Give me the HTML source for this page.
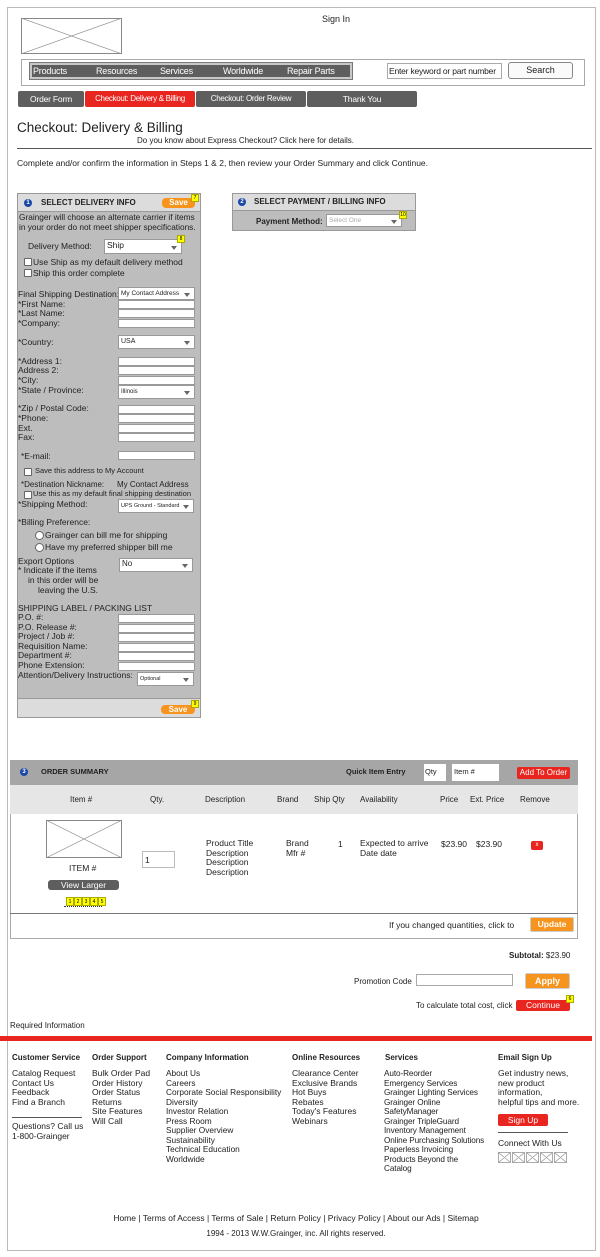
<!DOCTYPE html>
<html><head><meta charset="utf-8"><style>
*{margin:0;padding:0;box-sizing:border-box}
body{width:600px;height:1257px;position:relative;background:#fff;font-family:"Liberation Sans",Arial,sans-serif;font-size:9px;color:#222;overflow:hidden}
.a{position:absolute;white-space:nowrap;line-height:10px}
.box{position:absolute}
.inp{position:absolute;background:#fff;border:1px solid #999;height:9px}
.sel{position:absolute;background:#fff;border:1px solid #999;font-size:7px;line-height:12px;padding-left:2px}
.sel:after{content:"";position:absolute;right:4px;top:50%;margin-top:-1px;border-left:3px solid transparent;border-right:3px solid transparent;border-top:4px solid #666}
.badge{position:absolute;width:8px;height:8px;background:#ff0;border:1px solid #aa0;font-size:5px;line-height:6px;text-align:center;color:#000}
.cb{position:absolute;width:8px;height:8px;border:1px solid #666;background:#fff;border-radius:1px}
.rb{position:absolute;width:9px;height:9px;border:1px solid #666;background:#fff;border-radius:50%}
.num{position:absolute;width:8px;height:8px;border-radius:50%;background:#1a48a8;color:#fff;font-size:6px;line-height:8px;text-align:center;font-weight:bold}
.tab{position:absolute;top:91px;height:16px;background:#5e5e5e;color:#fff;text-align:center;line-height:16px;font-size:8.5px;border-radius:2px;white-space:nowrap;overflow:hidden;letter-spacing:-0.2px}
.b{font-weight:bold}
</style></head><body>
<div class="box" style="left:7px;top:7px;width:589px;height:1244px;border:1px solid #bbb"></div>
<svg class="box" style="left:21px;top:18px" width="101" height="36"><rect x=".5" y=".5" width="100" height="35" fill="#fff" stroke="#888"/><path d="M0 0L101 36M101 0L0 36" stroke="#888" stroke-width=".6"/></svg>
<div class="a" style="left:322px;top:14px">Sign In</div>
<div class="box" style="left:21px;top:59px;width:564px;height:27px;border:1px solid #aaa"></div>
<div class="box" style="left:30px;top:63px;width:322px;height:16px;background:#5e5e5e;border:2px solid #c8c8c8;outline:1px solid #777"></div>
<div class="a" style="left:33px;top:66px;color:#fff;letter-spacing:-0.2px">Products</div>
<div class="a" style="left:96px;top:66px;color:#fff;letter-spacing:-0.2px">Resources</div>
<div class="a" style="left:160px;top:66px;color:#fff;letter-spacing:-0.2px">Services</div>
<div class="a" style="left:223px;top:66px;color:#fff;letter-spacing:-0.2px">Worldwide</div>
<div class="a" style="left:287px;top:66px;color:#fff;letter-spacing:-0.2px">Repair Parts</div>
<div class="box" style="left:387px;top:63px;width:115px;height:16px;border:1px solid #aaa"></div>
<div class="a" style="left:389px;top:66px;font-size:8.5px;letter-spacing:-0.2px">Enter keyword or part number</div>
<div class="box" style="left:508px;top:62px;width:65px;height:17px;border:1px solid #888;border-radius:3px;background:#fafafa;text-align:center;line-height:15px">Search</div>
<div class="tab" style="left:18px;width:66px">Order Form</div>
<div class="tab" style="left:85px;width:110px;background:#e8251f;font-size:8px;letter-spacing:-0.3px">Checkout: Delivery &amp; Billing</div>
<div class="tab" style="left:196px;width:110px;font-size:8px;letter-spacing:-0.3px">Checkout: Order Review</div>
<div class="tab" style="left:307px;width:110px">Thank You</div>
<div class="a" style="left:17px;top:120px;font-size:13.5px;line-height:15px">Checkout: Delivery &amp; Billing</div>
<div class="a" style="left:137px;top:136px;font-size:8px">Do you know about Express Checkout? Click here for details.</div>
<div class="box" style="left:17px;top:148px;width:575px;height:1px;background:#555"></div>
<div class="a" style="left:17px;top:158px;font-size:8.5px">Complete and/or confirm the information in Steps 1 &amp; 2, then review your Order Summary and click Continue.</div>

<div class="box" style="left:17px;top:193px;width:184px;height:525px;background:#bdbdbd;border:1px solid #999"></div>
<div class="box" style="left:17px;top:193px;width:184px;height:19px;background:#dcdcdc;border:1px solid #999"></div>
<div class="box" style="left:17px;top:698px;width:184px;height:20px;background:#dcdcdc;border:1px solid #999"></div>
<div class="num" style="left:24px;top:199px">1</div>
<div class="a b" style="left:41px;top:198px;font-size:8px">SELECT DELIVERY INFO</div>
<div class="box" style="left:162px;top:198px;width:33px;height:10px;background:#f7941d;border-radius:4px;color:#fff;font-weight:bold;text-align:center;line-height:10px;font-size:8px">Save</div>
<div class="badge" style="left:191px;top:194px">7</div>
<div class="a" style="left:19px;top:212px;font-size:8.3px">Grainger will choose an alternate carrier if items</div>
<div class="a" style="left:19px;top:222px;font-size:8.3px">in your order do not meet shipper specifications.</div>
<div class="a" style="left:28px;top:241px;font-size:8.5px">Delivery Method:</div>
<div class="sel" style="left:104px;top:239px;width:78px;height:15px;font-size:8.5px;line-height:11px">Ship</div>
<div class="badge" style="left:177px;top:235px">8</div>
<div class="cb" style="left:24px;top:258px"></div><div class="a" style="left:33px;top:257px;font-size:8.5px">Use Ship as my default delivery method</div>
<div class="cb" style="left:24px;top:269px"></div><div class="a" style="left:33px;top:268px;font-size:8.5px">Ship this order complete</div>
<div class="a" style="left:18px;top:289px;font-size:8.5px">Final Shipping Destination:</div>
<div class="sel" style="left:118px;top:287px;width:77px;height:13px;font-size:6.5px;line-height:11px">My Contact Address</div>
<div class="a" style="left:18px;top:299px;font-size:8.5px">*First Name:</div><div class="inp" style="left:118px;top:300px;width:77px"></div>
<div class="a" style="left:18px;top:308px;font-size:8.5px">*Last Name:</div><div class="inp" style="left:118px;top:309px;width:77px"></div>
<div class="a" style="left:18px;top:318px;font-size:8.5px">*Company:</div><div class="inp" style="left:118px;top:319px;width:77px"></div>
<div class="a" style="left:18px;top:337px;font-size:8.5px">*Country:</div><div class="sel" style="left:118px;top:335px;width:77px;height:14px">USA</div>
<div class="a" style="left:18px;top:356px;font-size:8.5px">*Address 1:</div><div class="inp" style="left:118px;top:357px;width:77px"></div>
<div class="a" style="left:18px;top:365px;font-size:8.5px">Address 2:</div><div class="inp" style="left:118px;top:366px;width:77px"></div>
<div class="a" style="left:18px;top:375px;font-size:8.5px">*City:</div><div class="inp" style="left:118px;top:376px;width:77px"></div>
<div class="a" style="left:18px;top:385px;font-size:8.5px">*State / Province:</div><div class="sel" style="left:118px;top:385px;width:77px;height:14px;font-size:6px">Illinois</div>
<div class="a" style="left:18px;top:403px;font-size:8.5px">*Zip / Postal Code:</div><div class="inp" style="left:118px;top:405px;width:77px"></div>
<div class="a" style="left:18px;top:413px;font-size:8.5px">*Phone:</div><div class="inp" style="left:118px;top:414px;width:77px"></div>
<div class="a" style="left:18px;top:423px;font-size:8.5px">Ext.</div><div class="inp" style="left:118px;top:424px;width:77px"></div>
<div class="a" style="left:18px;top:432px;font-size:8.5px">Fax:</div><div class="inp" style="left:118px;top:433px;width:77px"></div>
<div class="a" style="left:21px;top:451px;font-size:8.5px">*E-mail:</div><div class="inp" style="left:118px;top:451px;width:77px"></div>
<div class="cb" style="left:24px;top:468px"></div><div class="a" style="left:35px;top:466px;font-size:7.5px">Save this address to My Account</div>
<div class="a" style="left:21px;top:480px;font-size:8px">*Destination Nickname:</div><div class="a" style="left:117px;top:480px;font-size:8px">My Contact Address</div>
<div class="cb" style="left:24px;top:491px"></div><div class="a" style="left:33px;top:489px;font-size:7.5px">Use this as my default final shipping destination</div>
<div class="a" style="left:18px;top:499px;font-size:8.5px">*Shipping Method:</div><div class="sel" style="left:118px;top:499px;width:76px;height:14px;font-size:5.5px">UPS Ground - Standard</div>
<div class="a" style="left:18px;top:517px;font-size:8.5px">*Billing Preference:</div>
<div class="rb" style="left:35px;top:531px"></div><div class="a" style="left:45px;top:530px;font-size:8.5px">Grainger can bill me for shipping</div>
<div class="rb" style="left:35px;top:543px"></div><div class="a" style="left:45px;top:542px;font-size:8.5px">Have my preferred shipper bill me</div>
<div class="a" style="left:18px;top:556px;font-size:8.5px">Export Options</div>
<div class="a" style="left:18px;top:565px;font-size:8.5px">* Indicate if the items</div>
<div class="a" style="left:28px;top:575px;font-size:8.5px">in this order will be</div>
<div class="a" style="left:38px;top:585px;font-size:8.5px">leaving the U.S.</div>
<div class="sel" style="left:119px;top:558px;width:74px;height:14px;font-size:8px;line-height:10px">No</div>
<div class="a" style="left:18px;top:603px;font-size:8.5px">SHIPPING LABEL / PACKING LIST</div>
<div class="a" style="left:18px;top:612px;font-size:8.5px">P.O. #:</div><div class="inp" style="left:118px;top:614px;width:77px"></div>
<div class="a" style="left:18px;top:622px;font-size:8.5px">P.O. Release #:</div><div class="inp" style="left:118px;top:624px;width:77px"></div>
<div class="a" style="left:18px;top:631px;font-size:8.5px">Project / Job #:</div><div class="inp" style="left:118px;top:633px;width:77px"></div>
<div class="a" style="left:18px;top:641px;font-size:8.5px">Requisition Name:</div><div class="inp" style="left:118px;top:643px;width:77px"></div>
<div class="a" style="left:18px;top:650px;font-size:8.5px">Department #:</div><div class="inp" style="left:118px;top:652px;width:77px"></div>
<div class="a" style="left:18px;top:660px;font-size:8.5px">Phone Extension:</div><div class="inp" style="left:118px;top:662px;width:77px"></div>
<div class="a" style="left:18px;top:670px;font-size:8.5px">Attention/Delivery Instructions:</div>
<div class="sel" style="left:137px;top:672px;width:57px;height:14px;font-size:5.5px">Optional</div>
<div class="box" style="left:161px;top:705px;width:34px;height:9px;background:#f7941d;border-radius:4px;color:#fff;font-weight:bold;text-align:center;line-height:9px;font-size:8px">Save</div>
<div class="badge" style="left:191px;top:700px">9</div>

<div class="box" style="left:232px;top:193px;width:184px;height:38px;background:#bdbdbd;border:1px solid #999"></div>
<div class="box" style="left:232px;top:193px;width:184px;height:18px;background:#dcdcdc;border:1px solid #999"></div>
<div class="num" style="left:238px;top:198px">2</div>
<div class="a b" style="left:254px;top:197px;font-size:8px">SELECT PAYMENT / BILLING INFO</div>
<div class="a b" style="left:256px;top:217px;font-size:8px">Payment Method:</div>
<div class="sel" style="left:326px;top:214px;width:76px;height:13px;color:#aaa;font-size:6.5px;line-height:11px">Select One</div>
<div class="badge" style="left:399px;top:211px">10</div>

<div class="box" style="left:10px;top:760px;width:568px;height:179px;border:1px solid #aaa"></div>
<div class="box" style="left:10px;top:760px;width:568px;height:25px;background:#a6a6a6"></div>
<div class="box" style="left:10px;top:785px;width:568px;height:29px;background:#e6e6e6"></div>
<div class="num" style="left:20px;top:768px">3</div>
<div class="a b" style="left:41px;top:767px;font-size:7.5px">ORDER SUMMARY</div>
<div class="a b" style="left:346px;top:767px;font-size:7.5px">Quick Item Entry</div>
<div class="box" style="left:424px;top:764px;width:22px;height:17px;background:#fff;font-size:7.5px;padding:3px 1px">Qty</div>
<div class="box" style="left:452px;top:764px;width:47px;height:17px;background:#fff;font-size:7.5px;padding:3px 2px">Item #</div>
<div class="box" style="left:517px;top:767px;width:53px;height:12px;background:#e8251f;color:#fff;border-radius:2px;text-align:center;line-height:12px;font-size:8px">Add To Order</div>
<div class="a" style="left:70px;top:795px;font-size:8px">Item #</div>
<div class="a" style="left:150px;top:795px;font-size:8px">Qty.</div>
<div class="a" style="left:205px;top:795px;font-size:8px">Description</div>
<div class="a" style="left:277px;top:795px;font-size:8px">Brand</div>
<div class="a" style="left:314px;top:795px;font-size:8px">Ship Qty</div>
<div class="a" style="left:360px;top:795px;font-size:8px">Availability</div>
<div class="a" style="left:440px;top:795px;font-size:8px">Price</div>
<div class="a" style="left:470px;top:795px;font-size:8px">Ext. Price</div>
<div class="a" style="left:520px;top:795px;font-size:8px">Remove</div>
<svg class="box" style="left:46px;top:820px" width="76" height="38"><rect x=".5" y=".5" width="75" height="37" fill="#fff" stroke="#888"/><path d="M0 0L76 38M76 0L0 38" stroke="#888" stroke-width=".6"/></svg>
<div class="a" style="left:69px;top:863px;font-size:8.5px">ITEM #</div>
<div class="box" style="left:48px;top:880px;width:71px;height:10px;background:#5e5e5e;color:#fff;border-radius:3px;text-align:center;line-height:10px;font-size:8.5px">View Larger</div>
<div class="box" style="left:66px;top:897px;width:41px;height:9px;display:flex">
<div class="badge" style="position:static;width:8px;height:9px;font-size:5px;line-height:8px">1</div><div class="badge" style="position:static;width:8px;height:9px;font-size:5px;line-height:8px">2</div><div class="badge" style="position:static;width:8px;height:9px;font-size:5px;line-height:8px">3</div><div class="badge" style="position:static;width:8px;height:9px;font-size:5px;line-height:8px">4</div><div class="badge" style="position:static;width:8px;height:9px;font-size:5px;line-height:8px">5</div></div>
<div class="box" style="left:64px;top:906px;width:38px;height:1px;border-top:1px dotted #333"></div>
<div class="box" style="left:142px;top:851px;width:33px;height:17px;border:1px solid #bbb;font-size:8.5px;padding:3px 2px">1</div>
<div class="a" style="left:206px;top:839px;font-size:8.5px;line-height:9.7px">Product Title<br>Description<br>Description<br>Description</div>
<div class="a" style="left:286px;top:839px;font-size:8.5px;line-height:9.7px">Brand<br>Mfr #</div>
<div class="a" style="left:338px;top:839px;font-size:8.5px">1</div>
<div class="a" style="left:360px;top:839px;font-size:8.5px;line-height:9.7px">Expected to arrive<br>Date date</div>
<div class="a" style="left:441px;top:839px;font-size:8.5px">$23.90</div>
<div class="a" style="left:476px;top:839px;font-size:8.5px">$23.90</div>
<div class="box" style="left:531px;top:841px;width:12px;height:9px;background:#e8251f;color:#fff;border-radius:2px;text-align:center;line-height:9px;font-size:6px">x</div>
<div class="box" style="left:10px;top:913px;width:568px;height:1px;background:#777"></div>
<div class="a" style="left:389px;top:920px;font-size:8.5px">If you changed quantities, click to</div>
<div class="box" style="left:530px;top:917px;width:44px;height:15px;background:#f7941d;border:1px solid #ccc;border-radius:2px;color:#fff;font-weight:bold;text-align:center;line-height:13px;font-size:8.5px">Update</div>

<div class="a" style="left:509px;top:951px;font-size:8px"><b>Subtotal:</b> $23.90</div>
<div class="a" style="left:354px;top:977px;font-size:8px">Promotion Code</div>
<div class="box" style="left:416px;top:974px;width:97px;height:12px;border:1px solid #aaa"></div>
<div class="box" style="left:525px;top:973px;width:45px;height:16px;background:#f7941d;border:1px solid #ccc;border-radius:2px;color:#fff;font-weight:bold;text-align:center;line-height:14px;font-size:9px">Apply</div>
<div class="a" style="left:416px;top:1001px;font-size:8px">To calculate total cost, click</div>
<div class="box" style="left:516px;top:1000px;width:54px;height:11px;background:#e8251f;border-radius:2px;color:#fff;text-align:center;line-height:11px;font-size:8.5px">Continue</div>
<div class="badge" style="left:566px;top:995px">6</div>
<div class="a" style="left:10px;top:1021px;font-size:8px">Required Information</div>
<div class="box" style="left:0;top:1036px;width:592px;height:5px;background:#e8251f"></div>

<div class="a b" style="left:12px;top:1053px;font-size:8px">Customer Service</div>
<div class="a b" style="left:92px;top:1053px;font-size:8px">Order Support</div>
<div class="a b" style="left:166px;top:1053px;font-size:8px">Company Information</div>
<div class="a b" style="left:292px;top:1053px;font-size:8px">Online Resources</div>
<div class="a b" style="left:385px;top:1053px;font-size:8px">Services</div>
<div class="a b" style="left:498px;top:1053px;font-size:8px">Email Sign Up</div>
<div class="a" style="left:12px;top:1069px;font-size:8.5px;line-height:9.5px">Catalog Request<br>Contact Us<br>Feedback<br>Find a Branch</div>
<div class="box" style="left:12px;top:1117px;width:70px;height:1px;background:#555"></div>
<div class="a" style="left:12px;top:1122px;font-size:8.5px;line-height:9.5px">Questions? Call us<br>1-800-Grainger</div>
<div class="a" style="left:92px;top:1069px;font-size:8.5px;line-height:9.5px">Bulk Order Pad<br>Order History<br>Order Status<br>Returns<br>Site Features<br>Will Call</div>
<div class="a" style="left:166px;top:1069px;font-size:8.3px;line-height:9.5px">About Us<br>Careers<br>Corporate Social Responsibility<br>Diversity<br>Investor Relation<br>Press Room<br>Supplier Overview<br>Sustainability<br>Technical Education<br>Worldwide</div>
<div class="a" style="left:292px;top:1069px;font-size:8.5px;line-height:9.5px">Clearance Center<br>Exclusive Brands<br>Hot Buys<br>Rebates<br>Today's Features<br>Webinars</div>
<div class="a" style="left:384px;top:1069px;font-size:8.2px;line-height:9.5px;letter-spacing:-0.1px">Auto-Reorder<br>Emergency Services<br>Grainger Lighting Services<br>Grainger Online<br>SafetyManager<br>Grainger TripleGuard<br>Inventory Management<br>Online Purchasing Solutions<br>Paperless Invoicing<br>Products Beyond the<br>Catalog</div>
<div class="a" style="left:498px;top:1069px;font-size:8.5px;line-height:9.5px">Get industry news,<br>new product<br>information,<br>helpful tips and more.</div>
<div class="box" style="left:498px;top:1114px;width:50px;height:12px;background:#e8251f;border-radius:2px;color:#fff;text-align:center;line-height:12px;font-size:8.5px">Sign Up</div>
<div class="box" style="left:498px;top:1132px;width:70px;height:1px;background:#555"></div>
<div class="a" style="left:498px;top:1138px;font-size:8.5px">Connect With Us</div>
<svg class="box" style="left:498px;top:1152px" width="70" height="11"><g fill="#fff" stroke="#888" stroke-width=".7"><rect x=".5" y=".5" width="12" height="10"/><rect x="14.5" y=".5" width="12" height="10"/><rect x="28.5" y=".5" width="12" height="10"/><rect x="42.5" y=".5" width="12" height="10"/><rect x="56.5" y=".5" width="12" height="10"/></g><path d="M.5 .5l12 10M12.5 .5l-12 10M14.5 .5l12 10M26.5 .5l-12 10M28.5 .5l12 10M40.5 .5l-12 10M42.5 .5l12 10M54.5 .5l-12 10M56.5 .5l12 10M68.5 .5l-12 10" stroke="#888" stroke-width=".6"/></svg>
<div class="a" style="left:0;width:592px;text-align:center;top:1213px;font-size:8.5px">Home | Terms of Access | Terms of Sale | Return Policy | Privacy Policy | About our Ads | Sitemap</div>
<div class="a" style="left:0;width:592px;text-align:center;top:1229px;font-size:8px">1994 - 2013 W.W.Grainger, inc. All rights reserved.</div>
</body></html>
